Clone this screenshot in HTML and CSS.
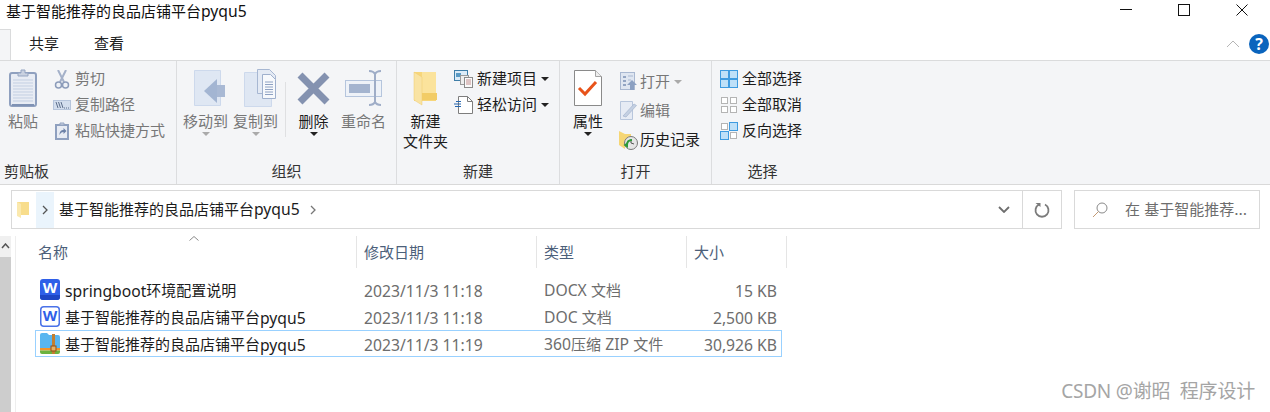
FILE: index.html
```html
<!DOCTYPE html>
<html lang="zh-CN">
<head>
<meta charset="utf-8">
<title>基于智能推荐的良品店铺平台pyqu5</title>
<link rel="stylesheet" href="styles.css">
</head>
<body>
<div class="window">
  <header class="titlebar">
    <span class="title">基于智能推荐的良品店铺平台<span class="lat">pyqu5</span></span>
    <div class="winctl">
      <svg class="ctl" viewBox="0 0 12 12"><path d="M0 5.500H12" stroke="#111" fill="none"/></svg>
      <svg class="ctl" viewBox="0 0 12 12"><rect x=".5" y=".5" width="11" height="11" stroke="#111" fill="none"/></svg>
      <svg class="ctl" viewBox="0 0 12 12"><path d="M.5.5l11 11M11.500.5l-11 11" stroke="#111" fill="none"/></svg>
    </div>
  </header>

  <nav class="tabs">
    <span class="tab-file"></span>
    <span class="tab">共享</span>
    <span class="tab">查看</span>
    <span class="tab-spacer"></span>
    <svg class="collapse" viewBox="0 0 14 8"><path d="M1 7l6-6 6 6" stroke="#b5b5b5" fill="none"/></svg>
    <svg class="help" viewBox="0 0 20 20"><circle cx="10" cy="10" r="10" fill="#0a64bd"/><text x="10" y="15.500" text-anchor="middle" class="help-q">?</text></svg>
  </nav>

  <section class="ribbon">
    <div class="group g-clip">
      <div class="body">
        <div class="big w30">
          <svg class="bigicon" width="28" height="38" viewBox="0 0 28 38">
            <rect x="1" y="4" width="26" height="33" rx="2" fill="#e8ecf4" stroke="#8fa0bf" stroke-width="2"/>
            <path d="M4 11H24M4 14H24M4 17H24M4 20H24M4 23H24M4 26H24M4 29H24M4 32H24" stroke="#c3cfe2"/>
            <path d="M3 36H25" stroke="#7f92b4" stroke-width="2"/>
            <path d="M9 7V4h3V1h4v3h3v3z" fill="#c9d1e0" stroke="#95a5c2"/>
          </svg>
          <span class="lbl dim">粘贴</span>
        </div>
        <div class="stack s-clip">
          <div class="item dim"><span class="ico"><svg width="18" height="19" viewBox="0 0 18 19"><path d="M5 0l6 12M13 0L7 12" stroke="#a4b1c9" stroke-width="2" fill="none"/><circle cx="5.500" cy="15" r="3" fill="#eef1f6" stroke="#8c9cba" stroke-width="1.500"/><circle cx="12.500" cy="15" r="3" fill="#eef1f6" stroke="#8c9cba" stroke-width="1.500"/></svg></span>剪切</div>
          <div class="item dim"><span class="ico"><svg width="18" height="10" viewBox="0 0 18 10"><rect x=".5" y=".5" width="17" height="9" fill="#d3deee" stroke="#b6c5dc"/><path d="M3 2l2 6M5.500 2l2 6M8 2l2 6" stroke="#5d6f8c" fill="none"/><path d="M11 8h1M13 8h1M15 8h1" stroke="#5d6f8c"/></svg></span>复制路径</div>
          <div class="item dim"><span class="ico"><svg width="14" height="18" viewBox="0 0 14 18"><rect x="1" y="3" width="12" height="14" fill="#e8ecf4" stroke="#8fa0bf" stroke-width="2"/><path d="M5 3V1h4v2z" fill="#c9d1e0" stroke="#95a5c2"/><path d="M4.500 13c0-4 2-5 4-5V6l3 3-3 3v-2c-2 0-3 1-4 3z" fill="#6d82a8"/></svg></span>粘贴快捷方式</div>
        </div>
      </div>
      <div class="glabel left">剪贴板</div>
    </div>

    <div class="group g-org">
      <div class="body">
        <div class="big w45">
          <svg class="bigicon nudge" width="33" height="38" viewBox="0 0 33 38">
            <path d="M1.500 1.500H27.500V36.500H1.500z" fill="#dfe7f3" stroke="#cdd9ec"/>
            <path d="M22 16H32V28H22z" fill="#a9b9d4"/><path d="M24 10V34L11 22z" fill="#a3b5d2"/>
          </svg>
          <span class="lbl dim">移动到</span>
          <span class="caret dimc"></span>
        </div>
        <div class="big w45 next">
          <svg class="bigicon nudge" width="33" height="38" viewBox="0 0 33 38">
            <path d="M1.500 3.500H28.500V37.500H1.500z" fill="#dfe7f3" stroke="#cdd9ec"/>
            <path d="M14.500 .5H26.500L32.500 6.500V24.500H14.500z" fill="#e4eaf4" stroke="#a7b7d2"/>
            <path d="M19.500 5.500H27.500L32.500 10.500V29.500H19.500z" fill="#f7f9fc" stroke="#9fb0cd"/>
            <path d="M22 13H30M22 15.500H30M22 18H30M22 20.500H30M22 23H30M22 25.500H30" stroke="#8ea1c2"/>
          </svg>
          <span class="lbl dim">复制到</span>
          <span class="caret dimc"></span>
        </div>
        <span class="sep"></span>
        <div class="big w45">
          <svg class="bigicon" width="33" height="38" viewBox="0 0 33 38">
            <path d="M3 6L30 33M30 6L3 33" stroke="#8492b0" stroke-width="7" fill="none"/>
          </svg>
          <span class="lbl">删除</span>
          <span class="caret"></span>
        </div>
        <div class="big w45 next">
          <svg class="bigicon" width="37" height="38" viewBox="0 0 37 38">
            <rect x=".5" y="11.500" width="36" height="16" fill="#eef2f8" stroke="#b5c5dd"/>
            <rect x="4" y="15" width="21" height="9" fill="#a4b4cf"/>
            <path d="M24 2c4 0 5 1 6 3 1-2 2-3 6-3M30 5V33M24 36c4 0 5-1 6-3 1 2 2 3 6 3" stroke="#9fadc7" stroke-width="2" fill="none"/>
          </svg>
          <span class="lbl dim">重命名</span>
        </div>
      </div>
      <div class="glabel">组织</div>
    </div>

    <div class="group g-new">
      <div class="body">
        <div class="big w45">
          <svg class="bigicon" width="25" height="38" viewBox="0 0 25 38">
            <path d="M1 3H23V32H1z" fill="#f7d67a"/>
            <path d="M9 3H23V29H24V31H9z" fill="#fbe39c"/>
            <path d="M1 3L9 8V36L1 31z" fill="#f9e3a3" stroke="#eecb6f" stroke-width=".5"/>
            <path d="M9 24H24V31H9z" fill="#f2cc66"/>
          </svg>
          <span class="lbl tight">新建<br>文件夹</span>
        </div>
        <div class="stack s-new">
          <div class="item"><span class="ico"><svg width="19" height="18" viewBox="0 0 19 18"><rect x=".5" y=".5" width="13" height="10" fill="#dcebf7" stroke="#3f7ea8"/><rect x="2" y="3" width="5" height="4" fill="#5a9ac4"/><rect x="6.500" y="5.500" width="8" height="9" fill="#eee" stroke="#9a9a9a"/><rect x="10.500" y="7.500" width="8" height="10" fill="#fafafa" stroke="#8a8a8a"/><path d="M12 10h5M12 12h5M12 14h5" stroke="#c28e8e"/></svg></span>新建项目<span class="caret inline"></span></div>
          <div class="item"><span class="ico"><svg width="19" height="18" viewBox="0 0 19 18"><path d="M4.500.5H13.500L18.500 5.500V17.500H4.500z" fill="#fff" stroke="#7d7d7d"/><path d="M13.500.5V5.500H18.500" fill="none" stroke="#7d7d7d"/><path d="M0 8h7M2 5.500h5M1 10.500h6" stroke="#2767b0" stroke-width="1.200"/></svg></span>轻松访问<span class="caret inline"></span></div>
        </div>
      </div>
      <div class="glabel">新建</div>
    </div>

    <div class="group g-open">
      <div class="body">
        <div class="big w30">
          <svg class="bigicon" width="28" height="38" viewBox="0 0 28 38">
            <path d="M.5 1.500H21.500L27.500 7.500V36.500H.5z" fill="#fff" stroke="#8a8a8a"/>
            <path d="M21.500 1.500V7.500H27.500" fill="#eee" stroke="#a5a5a5"/>
            <path d="M5 19l6 6 11-12" stroke="#e8531a" stroke-width="3" fill="none"/>
          </svg>
          <span class="lbl">属性</span>
          <span class="caret"></span>
        </div>
        <div class="stack s-open">
          <div class="item dim"><span class="ico"><svg width="17" height="19" viewBox="0 0 17 19"><rect x=".5" y=".5" width="14" height="17" fill="#dfe6f1" stroke="#a9b8d1"/><path d="M3 4h3v2H3zM3 8h3v2H3zM3 12h3v2H3z" fill="#93a5c3"/><path d="M8 4h5M8 8h3" stroke="#a9b8d1"/><path d="M7 13l5-5 5 5h-3v5h-4v-5z" fill="#8ba0c2"/></svg></span>打开<span class="caret inline dimc"></span></div>
          <div class="item dim"><span class="ico"><svg width="17" height="19" viewBox="0 0 17 19"><path d="M.5.5H12.500V18.500H.5z" fill="#e6ebf4" stroke="#b8c6dc"/><path d="M3 15L14 3l2.500 1.500L6 16z" fill="#c4d0e2" stroke="#a5b5cf" stroke-width=".7"/></svg></span>编辑</div>
          <div class="item"><span class="ico"><svg width="19" height="20" viewBox="0 0 19 20"><path d="M0 1l6 3H12V14H6v5L0 15z" fill="#f6d675"/><circle cx="12" cy="13" r="6.500" fill="#e6e6e6" stroke="#7a7a7a"/><path d="M12 9v4l3 1" stroke="#555" fill="none"/><path d="M9 12L4.500 15 9 18z" fill="#2e9a38"/><path d="M8 15c0-3 2-5 5-5" stroke="#2e9a38" stroke-width="2" fill="none"/></svg></span>历史记录</div>
        </div>
      </div>
      <div class="glabel">打开</div>
    </div>

    <div class="group g-sel">
      <div class="body">
        <div class="stack s-sel">
          <div class="item"><span class="ico"><svg width="18" height="18" viewBox="0 0 18 18"><rect x=".5" y=".5" width="17" height="17" fill="#bfe0f8" stroke="#3f9be0"/><path d="M9 0V18M0 9H18" stroke="#3f9be0" stroke-width="2"/></svg></span>全部选择</div>
          <div class="item"><span class="ico"><svg width="18" height="18" viewBox="0 0 18 18"><g fill="#fff" stroke="#b4b4b4"><rect x="1.500" y="1.500" width="6" height="6"/><rect x="10.500" y="1.500" width="6" height="6"/><rect x="1.500" y="10.500" width="6" height="6"/><rect x="10.500" y="10.500" width="6" height="6"/></g></svg></span>全部取消</div>
          <div class="item"><span class="ico"><svg width="18" height="18" viewBox="0 0 18 18"><g fill="#fff" stroke="#b4b4b4"><rect x="1.500" y="1.500" width="6" height="6"/><rect x="10.500" y="10.500" width="6" height="6"/></g><g fill="#bfe0f8" stroke="#3f9be0"><rect x="9.500" y=".5" width="8" height="8"/><rect x=".5" y="9.500" width="8" height="8"/></g></svg></span>反向选择</div>
        </div>
      </div>
      <div class="glabel">选择</div>
    </div>
  </section>

  <div class="addr-row">
    <div class="addr">
      <svg class="addr-folder" width="12" height="17" viewBox="0 0 12 17"><path d="M0 1H12V14H0z" fill="#f8dd8c"/><path d="M0 1l4 2v14l-4-2z" fill="#fbe9ae"/></svg>
      <span class="crumb-btn"><svg width="6" height="10" viewBox="0 0 6 10"><path d="M1 1l4 4-4 4" stroke="#555" stroke-width="1.300" fill="none"/></svg></span>
      <span class="path">基于智能推荐的良品店铺平台<span class="lat">pyqu5</span></span>
      <svg class="crumb-next" width="6" height="10" viewBox="0 0 6 10"><path d="M1 1l4 4-4 4" stroke="#777" stroke-width="1.300" fill="none"/></svg>
      <span class="tab-spacer"></span>
      <svg class="addr-drop" width="12" height="7" viewBox="0 0 12 7"><path d="M1 1l5 5 5-5" stroke="#6e6e6e" stroke-width="1.800" fill="none"/></svg>
      <span class="refresh"><svg width="16" height="16" viewBox="0 0 16 16"><path d="M5 2.500A6.500 6.500 0 1 0 11 2.500" stroke="#7b7b7b" stroke-width="1.800" fill="none"/><path d="M1.500 1H6.500V5z" fill="#7b7b7b"/></svg></span>
    </div>
    <div class="search">
      <svg width="16" height="16" viewBox="0 0 16 16"><circle cx="10" cy="6" r="5" stroke="#8a8a8a" fill="none"/><path d="M6.500 9.500L1 15" stroke="#c39a74"/></svg>
      <span class="search-text">在 基于智能推荐...</span>
    </div>
  </div>

  <main class="content">
    <div class="scroll">
      <svg class="scroll-up" width="9" height="6" viewBox="0 0 9 6"><path d="M1 5l3.500-4L8 5" stroke="#555" stroke-width="1.500" fill="none"/></svg>
      <span class="scroll-thumb"></span>
    </div>
    <div class="pane">
      <div class="head">
        <div class="hcell hname">名称<svg class="sort" width="10" height="5" viewBox="0 0 10 5"><path d="M.5 4.500L5 .5l4.500 4" stroke="#8a8a8a" fill="none"/></svg></div>
        <div class="hcell">修改日期</div>
        <div class="hcell">类型</div>
        <div class="hcell">大小</div>
      </div>
      <div class="row">
        <div class="name"><svg class="fi" width="20" height="21" viewBox="0 0 20 21"><rect width="20" height="21" rx="3" fill="#2f5fe8"/><path d="M0 16H20V18a3 3 0 0 1-3 3H3a3 3 0 0 1-3-3z" fill="#1f46c4"/><text x="10" y="14" text-anchor="middle" class="w-white">W</text></svg><span class="lat">springboot</span>环境配置说明</div>
        <div class="cell lat">2023/11/3 11:18</div>
        <div class="cell"><span class="lat">DOCX</span> 文档</div>
        <div class="cell size lat">15 KB</div>
      </div>
      <div class="row">
        <div class="name"><svg class="fi" width="20" height="21" viewBox="0 0 20 21"><rect x=".75" y=".75" width="18.500" height="19.500" rx="3" fill="#fff" stroke="#4a72e8" stroke-width="1.500"/><text x="10" y="15" text-anchor="middle" class="w-blue">W</text></svg>基于智能推荐的良品店铺平台<span class="lat">pyqu5</span></div>
        <div class="cell lat">2023/11/3 11:18</div>
        <div class="cell"><span class="lat">DOC</span> 文档</div>
        <div class="cell size lat">2,500 KB</div>
      </div>
      <div class="row selected">
        <div class="name"><svg class="fi" width="20" height="21" viewBox="0 0 20 21"><path d="M0 2a2 2 0 0 1 2-2H7l2 2H18a2 2 0 0 1 2 2V15H0z" fill="#58b6f0"/><path d="M0 15H20V17.500H0z" fill="#f2932a"/><path d="M0 17.500H20V19a2 2 0 0 1-2 2H2a2 2 0 0 1-2-2z" fill="#6cb33f"/><path d="M12 1h3V21H12z" fill="#c27f30"/><rect x="11" y="13" width="5" height="5" fill="#e8b060" stroke="#8a4f1c"/></svg>基于智能推荐的良品店铺平台<span class="lat">pyqu5</span></div>
        <div class="cell lat">2023/11/3 11:19</div>
        <div class="cell"><span class="lat">360</span>压缩 <span class="lat">ZIP</span> 文件</div>
        <div class="cell size lat">30,926 KB</div>
      </div>
    </div>
  </main>

  <div class="watermark">CSDN @谢昭&nbsp;&nbsp;程序设计</div>
</div>
</body>
</html>
```
FILE: styles.css
```css
*{box-sizing:border-box}
html,body{margin:0;padding:0;background:#fff}
body{font-family:Inter,"Noto Sans CJK SC",sans-serif;font-size:15px;line-height:20px;color:#1c1c1c}
.window{position:relative;width:1270px;height:412px;overflow:hidden}
.lat{font-family:"Noto Sans",sans-serif;font-size:15.7px}

.titlebar{display:flex;height:27px;align-items:flex-start;justify-content:space-between}
.title{margin:0 0 0 6px;padding-top:1px;color:#111}
.winctl{display:flex;padding:4px 22px 0 0;gap:46px}
.ctl{width:12px;height:12px;display:block}

.tabs{display:flex;align-items:center;height:33px}
.tab-file{width:11px;height:31px;margin-top:2px;background:#f4f5f7;border-top:1px solid #dadbdc;border-right:1px solid #dadbdc}
.tab{width:65px;padding:1px 0 0 18px;color:#222}
.tab-spacer{flex:1}
.collapse{width:14px;height:8px;margin-right:9px}
.help{width:20px;height:20px;margin-right:1px;overflow:visible}
.help-q{font:700 16px "Noto Sans",sans-serif;fill:#fff}

.ribbon{display:flex;height:125px;background:#f4f5f7;border-top:1px solid #dadbdc;border-bottom:1px solid #d9d9d9}
.group{display:flex;flex-direction:column;border-right:1px solid #dcdddf}
.g-clip{width:177px}
.g-org{width:220px}
.g-new{width:163px}
.g-open{width:152px}
.g-sel{width:101px;border-right:0}
.body{flex:1;display:flex;min-height:0}
.g-clip .body{padding-left:8px}
.g-org .body{padding-left:6px}
.g-new .body{padding-left:6px}
.g-open .body{padding-left:13px}
.g-sel .body{padding-left:8px}
.glabel{height:26px;line-height:28px;text-align:center;color:#333}
.glabel.left{text-align:left;padding-left:4px}

.big{display:flex;flex-direction:column;align-items:center;padding-top:8px}
.w30{width:30px}
.w45{width:45px}
.next{margin-left:5px}
.bigicon{display:block;flex:none}
.bigicon.nudge{margin-left:7px}
.lbl{display:block;margin-top:5px;text-align:center;white-space:nowrap}
.lbl.tight{line-height:19.500px}
.dim{color:#777}
.sep{width:1px;height:55px;margin:21px 5px 0 7px;background:#dfe0e2}
.caret{display:block;width:0;height:0;margin-top:0;border:4px solid transparent;border-top-color:#222;border-bottom:0}
.caret.dimc{border-top-color:#aaa}
.caret.inline{display:inline-block;margin-left:4px;vertical-align:2px}

.stack{display:flex;flex-direction:column}
.item{display:flex;align-items:center;height:26px;white-space:nowrap}
.ico{display:flex;align-items:center;justify-content:center;flex:none}
.s-clip{margin-left:15px;padding-top:5px}
.s-clip .ico{width:18px;margin-right:4px}
.s-new{margin-left:6px;padding-top:5px}
.s-new .ico{width:19px;margin-right:4px}
.s-open{margin-left:16px;padding-top:6px}
.s-open .item{height:29px}
.s-open .ico{width:19px;margin-right:2px}
.s-sel{padding-top:5px}
.s-sel .ico{width:18px;margin-right:4px}

.addr-row{display:flex;margin:5px 0 0 11px;height:39px;gap:12px}
.addr{display:flex;align-items:center;width:1051px;border:1px solid #d9d9d9;padding-left:5px}
.addr-folder{flex:none}
.crumb-btn{display:flex;align-items:center;justify-content:center;width:18px;height:36px;margin-left:7px;background:#eaf4fc}
.path{margin-left:5px;color:#1c1c1c}
.crumb-next{margin-left:10px}
.addr-drop{margin-right:12px}
.refresh{display:flex;align-items:center;justify-content:center;width:39px;height:37px;border-left:1px solid #d9d9d9}
.search{display:flex;align-items:center;width:186px;border:1px solid #d9d9d9;padding-left:17px;color:#6d6d6d}
.search-text{margin-left:17px}

.content{display:flex;margin-top:7px;height:176px}
.scroll{display:flex;flex-direction:column;width:11px;margin-right:4px;background:#f0f0f0}
.scroll-up{margin:7px 0 0 1px}
.scroll-thumb{flex:1;margin-top:8px;background:#cdcdcd}
.pane{flex:1;border-left:1px solid #eee;padding-left:19px}
.head{display:grid;grid-template-columns:321px 180px 150px 100px;height:32px;margin-left:1px;margin-bottom:8px}
.hcell{position:relative;display:flex;align-items:center;padding:1px 0 0 7px;border-right:1px solid #e5e5e5;color:#4c607a}
.hname{padding-left:2px}
.sort{position:absolute;left:153px;top:0}
.row{display:grid;grid-template-columns:321px 180px 150px 94px;width:747px;height:27px;padding-top:2px;border:1px solid transparent;align-items:center}
.row.selected{border-color:#99d1ff}
.name{display:flex;align-items:center;padding-left:4px;white-space:nowrap;color:#1c1c1c}
.fi{flex:none;margin:-2px 5px 0 0;overflow:visible}
.cell{padding-left:7px;color:#6d6d6d;white-space:nowrap}
.size{padding:0 4px 0 0;text-align:right}
.w-white{font:700 15px "Noto Sans",sans-serif;fill:#fff}
.w-blue{font:700 15px "Noto Sans",sans-serif;fill:#2f5fe8}

.watermark{position:absolute;right:15px;top:379px;font-family:"Noto Sans","Noto Sans CJK SC",sans-serif;font-size:19px;line-height:24px;letter-spacing:-.2px;color:#a5a5a5;white-space:nowrap}
```
